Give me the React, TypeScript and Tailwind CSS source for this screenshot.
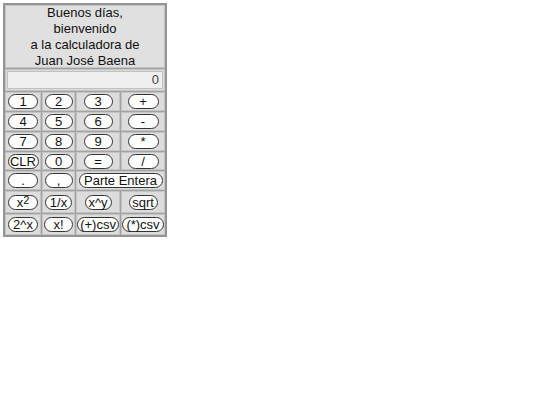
import type { ReactNode } from "react";

type Key = { label: ReactNode; w: string; span?: boolean };

// each row is [cells...]; cells follow the 4 column grid
const rows: { h: string; keys: Key[] }[] = [
  { h: "h-[19px]", keys: [{ label: "1", w: "w-[30px]" }, { label: "2", w: "w-[28px]" }, { label: "3", w: "w-[29px]" }, { label: "+", w: "w-[31px]" }] },
  { h: "h-[19px]", keys: [{ label: "4", w: "w-[30px]" }, { label: "5", w: "w-[28px]" }, { label: "6", w: "w-[29px]" }, { label: "-", w: "w-[31px]" }] },
  { h: "h-[19px]", keys: [{ label: "7", w: "w-[30px]" }, { label: "8", w: "w-[28px]" }, { label: "9", w: "w-[29px]" }, { label: "*", w: "w-[31px]" }] },
  { h: "h-[18px]", keys: [{ label: "CLR", w: "w-[31px]" }, { label: "0", w: "w-[28px]" }, { label: "=", w: "w-[29px]" }, { label: "/", w: "w-[31px]" }] },
  { h: "h-[19px]", keys: [{ label: ".", w: "w-[30px]" }, { label: ",", w: "w-[28px]" }, { label: "Parte Entera", w: "w-[84px]", span: true }] },
  {
    h: "h-[22px]",
    keys: [
      { label: <>x<sup className="text-[11px] relative -top-[2px]">2</sup></>, w: "w-[30px]" },
      { label: "1/x", w: "w-[27px]" },
      { label: "x^y", w: "w-[27px]" },
      { label: "sqrt", w: "w-[29px]" },
    ],
  },
  { h: "h-[21px]", keys: [{ label: "2^x", w: "w-[30px]" }, { label: "x!", w: "w-[29px]" }, { label: "(+)csv", w: "w-[43px]" }, { label: "(*)csv", w: "w-[43px]" }] },
];

export default function App() {
  return (
    <div className="w-[540px] h-[405px] bg-white pt-[3px] pl-[3px]" style={{ fontFamily: '"Liberation Sans", Arial, sans-serif' }}>
      <div className="w-[164px] border-2 border-[#949494] bg-[#a2a2a2] flex flex-col gap-[1px]">
        <div className="h-[63px] bg-[#e0e0e0] border border-[#c4c4c4] flex flex-col items-center justify-center text-[13px] leading-[16px] text-[#111] text-center">
          <span>Buenos días,</span>
          <span>bienvenido</span>
          <span>a la calculadora de</span>
          <span>Juan José Baena</span>
        </div>
        <div className="h-[22px] bg-[#dcdcdc] border border-[#c4c4c4] flex items-center px-[1px]">
          <div className="w-full h-[18px] bg-[#efefef] border border-[#c0c0c0] text-right text-[13px] leading-[16px] pr-[3px] text-[#444]">0</div>
        </div>
        {rows.map((row, i) => (
          <div key={i} className={`grid grid-cols-[36px_33px_44px_44px] gap-[1px] ${row.h}`}>
            {row.keys.map((k, j) => (
              <div
                key={j}
                className={`bg-[#dcdcdc] border border-[#c4c4c4] flex items-center justify-center ${k.span ? "col-span-2" : ""}`}
              >
                <button
                  className={`${k.w} h-[15px] bg-white border border-[#333] rounded-full text-[13px] leading-[13px] text-[#111] flex items-center justify-center whitespace-nowrap`}
                >
                  {k.label}
                </button>
              </div>
            ))}
          </div>
        ))}
      </div>
    </div>
  );
}
